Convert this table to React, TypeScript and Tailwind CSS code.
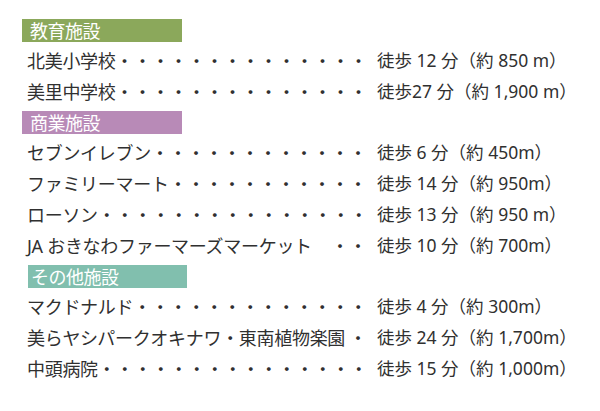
import React from 'react';

type Row = { name: string; dots: number; walk: string };
type Section = { title: string; color: string; inset: string; rows: Row[] };

const sections: Section[] = [
  {
    title: '教育施設',
    color: 'bg-[#8ba85b]',
    inset: 'ml-[22px] w-[160px] pl-[8px]',
    rows: [
      { name: '北美小学校', dots: 14, walk: '徒歩 12 分（約 850 m）' },
      { name: '美里中学校', dots: 14, walk: '徒歩27 分（約 1,900 m）' },
    ],
  },
  {
    title: '商業施設',
    color: 'bg-[#b88ab7]',
    inset: 'ml-[22px] w-[160px] pl-[8px]',
    rows: [
      { name: 'セブンイレブン', dots: 12, walk: '徒歩 6 分（約 450m）' },
      { name: 'ファミリーマート', dots: 11, walk: '徒歩 14 分（約 950m）' },
      { name: 'ローソン', dots: 15, walk: '徒歩 13 分（約 950 m）' },
      { name: 'JA おきなわファーマーズマーケット', dots: 2, walk: '徒歩 10 分（約 700m）' },
    ],
  },
  {
    title: 'その他施設',
    color: 'bg-[#81bfae]',
    inset: 'ml-[28px] w-[159px] pl-[3px]',
    rows: [
      { name: 'マクドナルド', dots: 13, walk: '徒歩 4 分（約 300m）' },
      { name: '美らヤシパークオキナワ・東南植物楽園', dots: 1, walk: '徒歩 24 分（約 1,700m）' },
      { name: '中頭病院', dots: 15, walk: '徒歩 15 分（約 1,000m）' },
    ],
  },
];

export default function App() {
  return (
    <div
      className="w-[600px] h-[411px] bg-white pt-[15px] text-[#303030] overflow-hidden"
      style={{ fontFamily: '"Noto Sans", "Noto Sans CJK JP", sans-serif' }}
    >
      {sections.map((s) => (
        <div key={s.title}>
          <div className="h-[30px] pt-[4px]">
            <div className={`${s.color} ${s.inset} h-[23px] flex items-center text-white text-[18px] leading-none tracking-[-0.5px]`}>
              {s.title}
            </div>
          </div>
          {s.rows.map((r) => (
            <div key={r.name} className="h-[31px] flex items-center text-[18px] leading-none whitespace-nowrap">
              <div className="ml-[27px] w-[340px] flex justify-between">
                <span className="tracking-[-0.3px]">{r.name}</span>
                <span>{'・'.repeat(r.dots)}</span>
              </div>
              <span className="ml-[10px] text-[17.5px]">{r.walk}</span>
            </div>
          ))}
        </div>
      ))}
    </div>
  );
}
